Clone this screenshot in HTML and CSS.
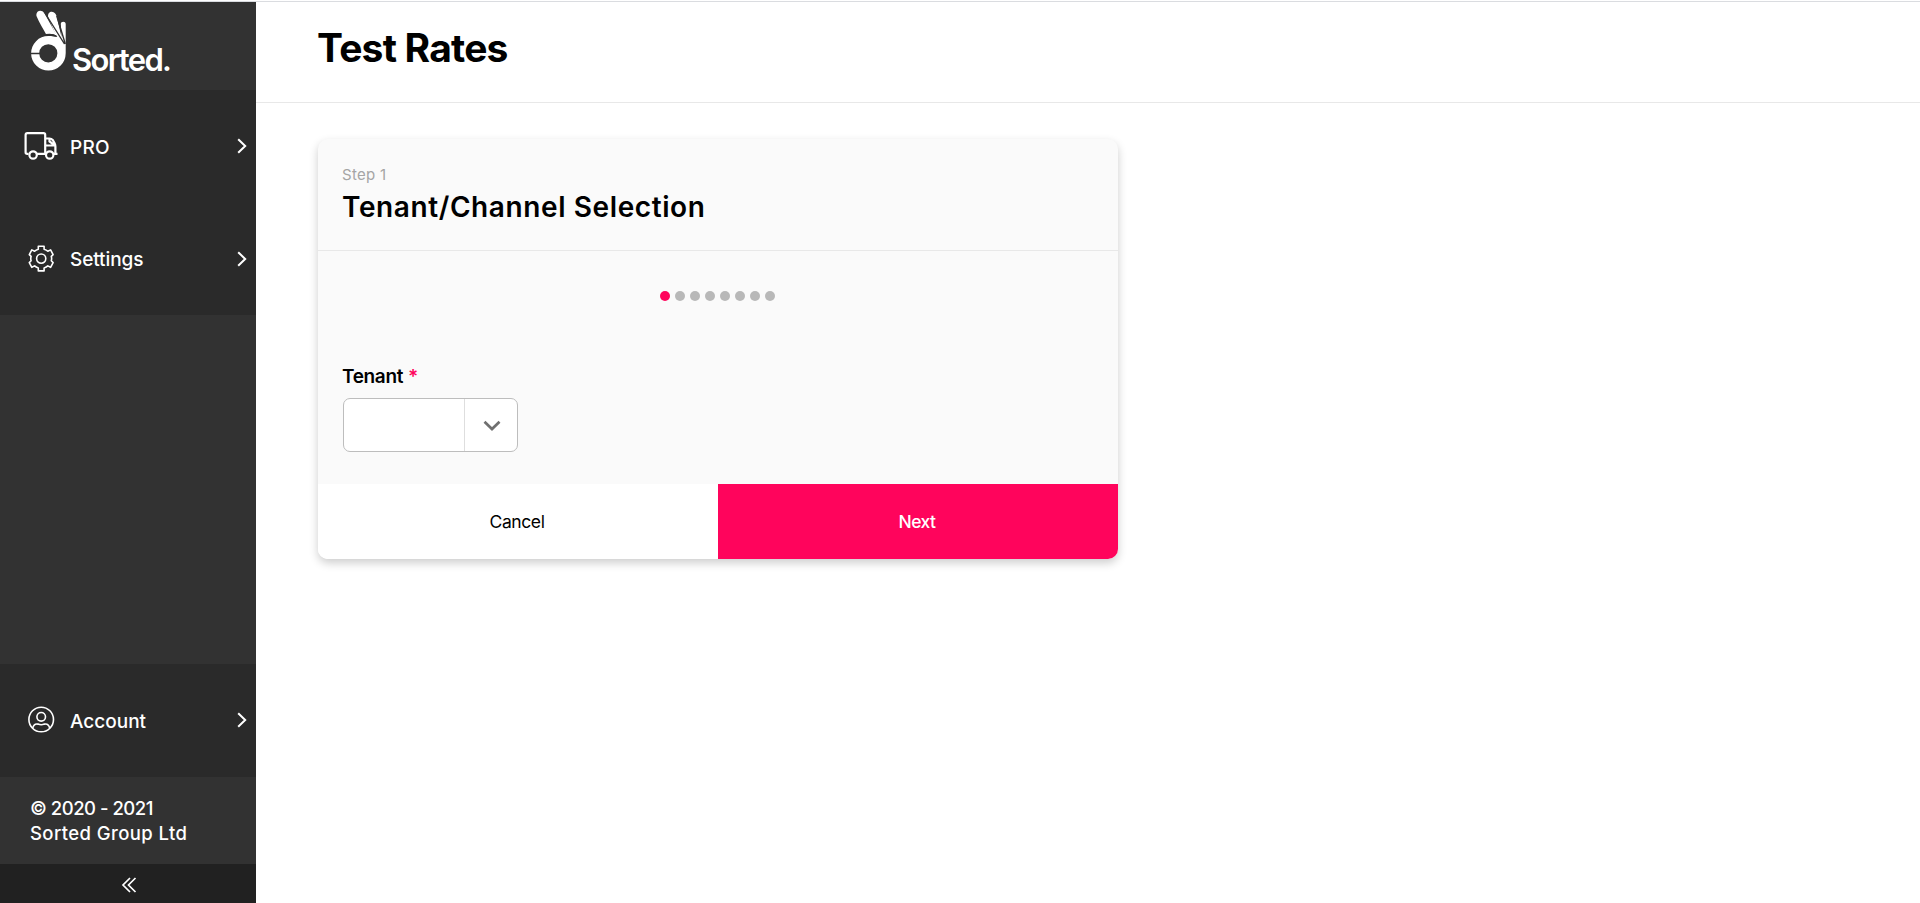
FILE: index.html
```html
<!DOCTYPE html>
<html lang="en">
<head>
<meta charset="utf-8">
<title>Test Rates</title>
<link rel="stylesheet" href="styles.css">
</head>
<body>
<div class="app">
  <aside class="sidebar">
    <div class="brand">
      <svg class="brand-mark" width="36" height="62" viewBox="0 0 36 62" fill="#fff">
        <path fill-rule="evenodd" d="M17.300 26C22 26 24.500 27 25.500 26.700L17.500 8C16.200 4.500 18 1.800 20.800 1.800C23.500 1.800 25 4 25.800 7L30.500 27L29.800 14C29.800 11 34.700 11 34.700 14V43.300A17.300 17.300 0 1 1 17.300 26ZM17.300 34.200a9.100 9.100 0 1 0 0 18.200a9.100 9.100 0 1 0 0-18.200Z"/>
        <path d="M5.700 6.500C3.800 1.500 10 -1.800 13.300 3L26 26C22 23.500 18 23.600 15.200 24.600C12.500 19 8 12.500 5.700 6.500Z"/>
        <path d="M13 1.500L33.500 34M25.800 6L34.300 34M15 24.800Q21 23.500 26 26.500M0 43.500H9" fill="none" stroke="#323232" stroke-width="1.400"/>
      </svg>
      <span class="brand-name">Sorted.</span>
    </div>
    <nav class="nav">
      <a class="nav-item">
        <svg class="nav-icon" width="34" height="28" viewBox="0 0 34 28" fill="none" stroke="#fff" stroke-width="2.200">
          <path d="M4.500 21.800H3.200Q1.600 21.800 1.600 20.200V3Q1.600 1.200 3.400 1.200H19.600Q21.200 1.200 21.200 2.800V21.800H12.500M21.200 6.500H25.500Q27.400 6.500 28.700 8L30.500 11Q31.400 12.500 31.400 14.500V21.800M21.200 13.500H31M25.500 6.500V9.500L31 13.500M29.500 21.800H33.500"/>
          <circle cx="9.100" cy="23" r="3.700"/><circle cx="25.700" cy="23" r="3.700"/>
        </svg>
        <span class="nav-label pro">PRO</span>
        <svg class="chevron" width="10" height="16" viewBox="0 0 10 16"><path d="M1.200 1.200L8.200 8L1.200 14.800"/></svg>
      </a>
      <a class="nav-item">
        <svg class="nav-icon" width="34" height="28" viewBox="0 0 34 28" fill="none" stroke="#fff" stroke-width="1.600">
          <path d="M14.300 1.300h5.800v3q2.300.6 3.700 2l2.800-1.400l2.500 4.700l-1.800 1.800q.7 2.200 0 4.400l1.800 1.800l-2.500 4.700l-2.800-1.400q-1.400 1.400-3.700 2v3h-5.800v-3q-2.300-.6-3.700-2l-2.800 1.400l-2.500-4.700l1.800-1.800q-.7-2.200 0-4.400l-1.800-1.800l2.500-4.700l2.800 1.400q1.400-1.400 3.700-2Z" stroke-linejoin="round"/>
          <circle cx="17.200" cy="13.600" r="4.600"/>
        </svg>
        <span class="nav-label settings">Settings</span>
        <svg class="chevron" width="10" height="16" viewBox="0 0 10 16"><path d="M1.200 1.200L8.200 8L1.200 14.800"/></svg>
      </a>
    </nav>
    <div class="spacer"></div>
    <nav class="nav account-nav">
      <a class="nav-item">
        <svg class="nav-icon" width="34" height="28" viewBox="0 0 34 28" fill="none" stroke="#fff" stroke-width="1.600">
          <circle cx="17.200" cy="13.500" r="12.300"/><circle cx="17.200" cy="10.800" r="4.300"/>
          <path d="M8.700 22.300C9.500 18.500 12 17.700 14 18.100Q17.200 19.300 20.400 18.100C22.400 17.700 24.900 18.500 25.700 22.300"/>
        </svg>
        <span class="nav-label account">Account</span>
        <svg class="chevron" width="10" height="16" viewBox="0 0 10 16"><path d="M1.200 1.200L8.200 8L1.200 14.800"/></svg>
      </a>
    </nav>
    <div class="legal"><span class="years">© 2020 - 2021</span><span class="company">Sorted Group Ltd</span></div>
    <button class="collapse">
      <svg width="16" height="16" viewBox="0 0 16 16" fill="none" stroke="#fff" stroke-width="1.700"><path d="M9 1L2 8L9 15M14.500 1L7.500 8L14.500 15"/></svg>
    </button>
  </aside>
  <main class="main">
    <header class="page-header"><h1 class="page-title">Test Rates</h1></header>
    <section class="card">
      <div class="card-header">
        <div class="step">Step 1</div>
        <h2 class="card-title">Tenant/Channel Selection</h2>
      </div>
      <div class="card-body">
        <div class="dots">
          <i class="dot active"></i><i class="dot"></i><i class="dot"></i><i class="dot"></i><i class="dot"></i><i class="dot"></i><i class="dot"></i><i class="dot"></i>
        </div>
        <div class="field-label"><span>Tenant</span><span class="required">*</span></div>
        <div class="select">
          <div class="select-value"></div>
          <div class="select-toggle"><svg width="18" height="12" viewBox="0 0 18 12" fill="none" stroke="#707070" stroke-width="2.700"><path d="M1.500 1.700L9 9L16.500 1.700"/></svg></div>
        </div>
      </div>
      <div class="card-actions">
        <button class="btn cancel"><span>Cancel</span></button>
        <button class="btn next"><span>Next</span></button>
      </div>
    </section>
  </main>
</div>
</body>
</html>
```
FILE: styles.css
```css
* { box-sizing: border-box; }
body { margin: 0; background: #fff; color: #000; font-family: Inter, "Liberation Sans", sans-serif; }
button { border: 0; padding: 0; font-family: inherit; }
.app { display: flex; height: 903px; padding-top: 2px; background: linear-gradient(#fff 1px, #dadce0 1px, #dadce0 2px, #fff 2px); }
.sidebar { display: flex; flex-direction: column; width: 256px; background: #323232; color: #fff; }
.brand { display: flex; align-items: flex-start; height: 88px; padding: 8px 0 0 31px; }
.brand-name { margin: 30px 0 0 5px; font-size: 31px; line-height: 40px; font-weight: 600; letter-spacing: -1.7px; }
.nav { background: #2a2a2a; }
.nav-item { display: flex; align-items: center; height: 112.5px; padding: 0 9px 0 24px; }
.nav-label { flex: 1; margin-left: 12px; padding-top: 3px; font-size: 19px; line-height: 24px; font-weight: 500; }
.pro { letter-spacing: 0.3px; }
.settings { letter-spacing: -0.1px; }
.account { letter-spacing: 0; }
.chevron { fill: none; stroke: #fff; stroke-width: 2; }
.spacer { flex: 1; }
.account-nav { height: 113px; }
.legal { display: flex; flex-direction: column; height: 87px; padding: 19px 0 0 30px; font-size: 18.500px; line-height: 25px; font-weight: 500; }
.years { letter-spacing: -0.5px; }
.company { letter-spacing: 0.4px; }
.collapse { display: flex; align-items: center; justify-content: center; height: 39px; padding: 3px 0 0 1px; background: #212121; }
.main { flex: 1; }
.page-header { height: 101px; padding: 21px 0 0 61px; border-bottom: 1px solid #e8e8e8; }
.page-title { margin: 0; font-size: 39px; line-height: 50px; font-weight: 700; letter-spacing: -0.8px; }
.card { display: flex; flex-direction: column; width: 800px; height: 420px; margin: 36px 0 0 62px; border-radius: 10px; background: #fafafa; box-shadow: 0 4px 10px rgba(0, 0, 0, 0.2); overflow: hidden; }
.card-header { height: 112px; padding: 26px 0 0 24px; border-bottom: 1px solid #e8e8e8; }
.step { color: #a5a5a5; font-size: 15px; line-height: 20px; letter-spacing: 0.3px; }
.card-title { margin: 5px 0 0; font-size: 28px; line-height: 34px; font-weight: 600; letter-spacing: 0.6px; }
.card-body { flex: 1; padding: 40px 25px 0; }
.dots { display: flex; justify-content: center; gap: 5px; margin-right: 1px; }
.dot { width: 10px; height: 10px; border-radius: 50%; background: #b8b8b8; }
.dot.active { background: #ff045c; }
.field-label { display: flex; gap: 5px; margin: 64px 0 0 -1px; font-size: 19px; line-height: 24px; font-weight: 600; letter-spacing: -0.35px; }
.required { color: #ff045c; }
.select { display: flex; width: 175px; height: 54px; margin-top: 9px; border: 1px solid #bdbdbd; border-radius: 7px; background: #fff; }
.select-value { width: 121px; border-right: 1px solid #dedede; }
.select-toggle { display: flex; flex: 1; align-items: center; justify-content: center; padding: 1px 0 0 1px; }
.card-actions { display: flex; height: 75px; background: #fff; }
.btn { flex: 1; padding-right: 2px; font-size: 17.500px; line-height: 22px; }
.cancel { background: #fff; color: #000; letter-spacing: -0.4px; }
.next { background: #ff045c; color: #fff; font-weight: 500; letter-spacing: -0.6px; }
```
